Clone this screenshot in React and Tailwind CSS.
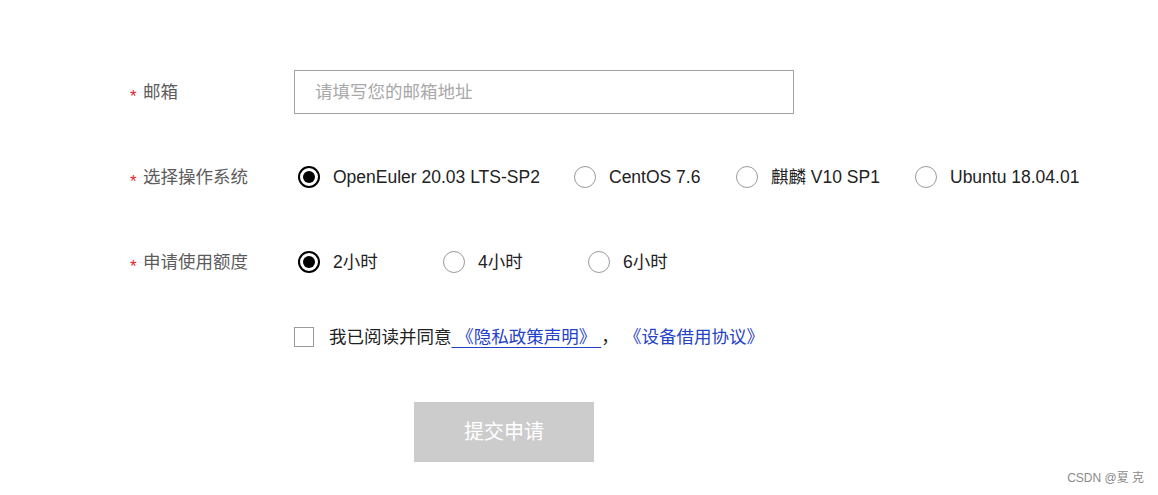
import React from "react";

const FONT = { fontFamily: '"Liberation Sans", "Noto Sans CJK SC", sans-serif' };

function Label({ children }) {
  return (
    <div className="w-[166px] shrink-0 flex items-center">
      <span className="w-[15px] pl-[2px] text-[17px] leading-none text-[#e0242a] pt-[8px]">*</span>
      <span className="text-[17.5px] text-[#5c5c5c]">{children}</span>
    </div>
  );
}

function Radio({ checked }) {
  return checked ? (
    <span className="w-[22px] h-[22px] rounded-full border-2 border-black flex items-center justify-center shrink-0">
      <span className="w-[12px] h-[12px] rounded-full bg-black" />
    </span>
  ) : (
    <span className="w-[22px] h-[22px] rounded-full border-[1.5px] border-[#9a9a9a] shrink-0" />
  );
}

function Option({ checked, children, w }) {
  return (
    <div className={"flex items-center gap-[13px] shrink-0 " + w}>
      <Radio checked={checked} />
      <span className="text-[17.5px] text-[#222222] whitespace-nowrap">{children}</span>
    </div>
  );
}

export default function App() {
  return (
    <div className="w-[1158px] h-[495px] bg-white relative overflow-hidden" style={FONT}>
      <div className="pt-[70px] pl-[128px]">
        <div className="flex items-center h-[44px]">
          <Label>邮箱</Label>
          <div className="w-[500px] h-[44px] border border-[#a0a0a0] flex items-center px-[20px]">
            <span className="text-[17.5px] text-[#a8a8a8]">请填写您的邮箱地址</span>
          </div>
        </div>

        <div className="flex items-center h-[44px] mt-[41px]">
          <Label>选择操作系统</Label>
          <div className="flex items-center pl-[4px]">
            <Option checked w="w-[276px]">OpenEuler 20.03 LTS-SP2</Option>
            <Option w="w-[162px]">CentOS 7.6</Option>
            <Option w="w-[179px]">麒麟 V10 SP1</Option>
            <Option w="">Ubuntu 18.04.01</Option>
          </div>
        </div>

        <div className="flex items-center h-[44px] mt-[41px]">
          <Label>申请使用额度</Label>
          <div className="flex items-center pl-[4px]">
            <Option checked w="w-[145px]">2小时</Option>
            <Option w="w-[145px]">4小时</Option>
            <Option w="w-[145px]">6小时</Option>
          </div>
        </div>

        <div className="flex items-center h-[20px] mt-[43px] pl-[166px]">
          <span className="w-[20px] h-[20px] border-[1.5px] border-[#9a9a9a] shrink-0" />
          <span className="ml-[15px] text-[17.5px] text-[#222222] whitespace-nowrap">
            我已阅读并同意
            <span className="text-[#2441c8] underline underline-offset-[4px]">{"\u00a0《隐私政策声明》\u00a0"}</span>
            ，
            <span className="ml-[14px] text-[#2441c8]">《设备借用协议》</span>
          </span>
        </div>

        <div className="mt-[55px] pl-[286px]">
          <div className="w-[180px] h-[60px] bg-[#cccccc] flex items-center justify-center">
            <span className="text-[20px] text-white">提交申请</span>
          </div>
        </div>
      </div>

      <div className="absolute right-[14px] bottom-[8px] text-[12px] text-[#8a8a8a] whitespace-pre">CSDN @夏 克</div>
    </div>
  );
}
